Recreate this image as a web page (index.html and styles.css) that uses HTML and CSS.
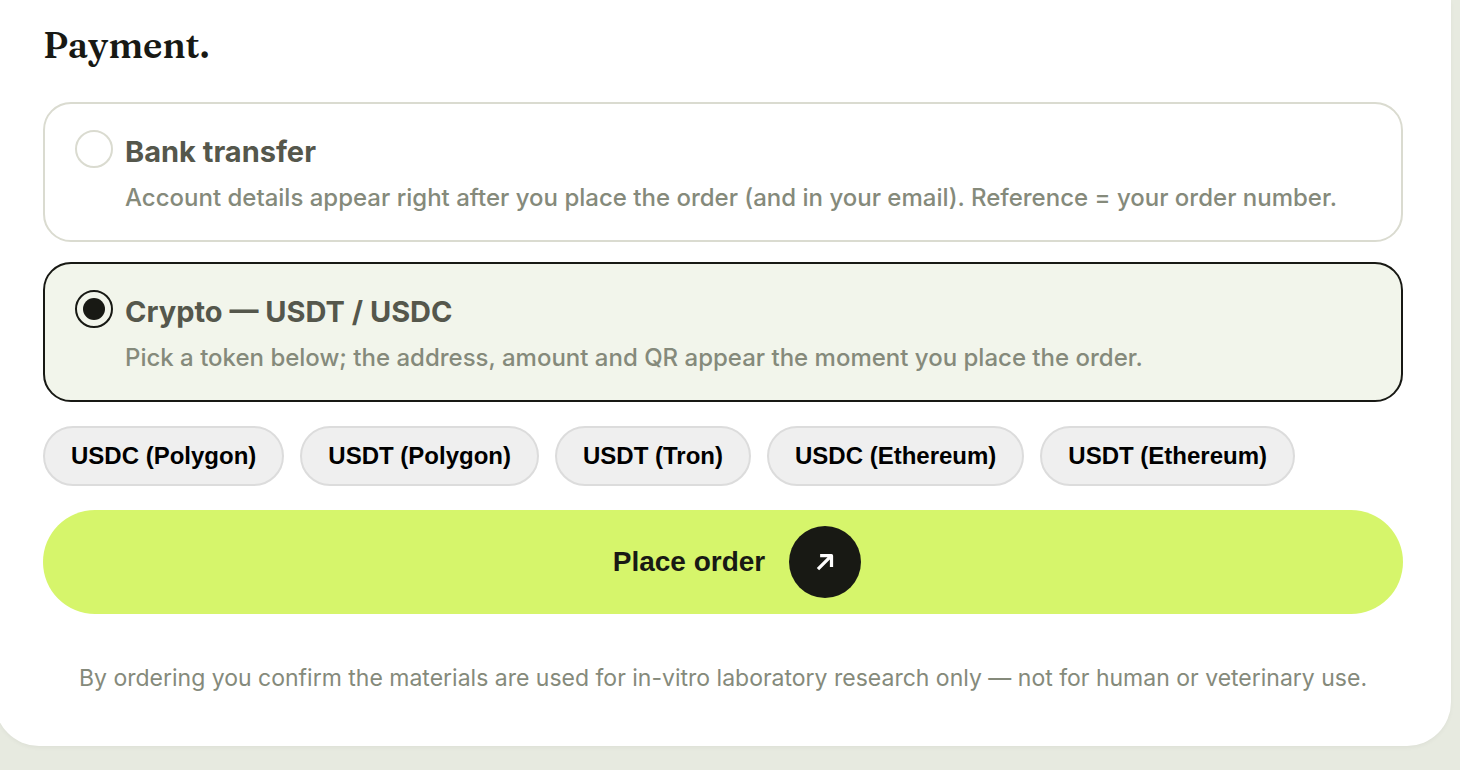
FILE: index.html
```
<!DOCTYPE html>
<html lang="en">
<head>
<meta charset="utf-8">
<meta name="viewport" content="width=device-width, initial-scale=1">
<title>Payment</title>
<link rel="stylesheet" href="styles.css">
</head>
<body>
<main class="panel">
  <h2 class="heading" id="payment-heading">Payment.</h2>
  <form class="form" aria-labelledby="payment-heading">
    <div class="options">
      <label class="option">
        <input class="option-radio" type="radio" name="method" value="bank">
        <span class="option-text">
          <span class="option-title">Bank transfer</span>
          <span class="option-note">Account details appear right after you place the order (and in your email). Reference = your order number.</span>
        </span>
      </label>
      <label class="option">
        <input class="option-radio" type="radio" name="method" value="crypto" checked>
        <span class="option-text">
          <span class="option-title">Crypto — USDT / USDC</span>
          <span class="option-note">Pick a token below; the address, amount and QR appear the moment you place the order.</span>
        </span>
      </label>
    </div>
    <div class="tokens">
      <button class="token" type="button">USDC (Polygon)</button>
      <button class="token" type="button">USDT (Polygon)</button>
      <button class="token" type="button">USDT (Tron)</button>
      <button class="token" type="button">USDC (Ethereum)</button>
      <button class="token" type="button">USDT (Ethereum)</button>
    </div>
    <button class="submit" type="submit">
      <span>Place order</span>
      <span class="submit-badge">
        <svg class="submit-icon" viewBox="0 0 24 24" aria-hidden="true"><path d="M5.5 18.5 17.5 6.5M7.5 6.2H18V16.5"/></svg>
      </span>
    </button>
  </form>
  <p class="disclaimer">By ordering you confirm the materials are used for in-vitro laboratory research only — not for human or veterinary use.</p>
</main>
</body>
</html>
```
FILE: styles.css
```
* {
  box-sizing: border-box;
}

body {
  margin: 0;
  background: #e7eae0;
  color: #181914;
  font-family: Inter, "Liberation Sans", sans-serif;
  overflow-x: hidden;
}

.panel {
  margin: 0 9px 24px -5px;
  padding: 20px 48px 50px;
  background: #fff;
  border-radius: 0 0 44px 44px;
  box-shadow: 0 2px 4px rgba(24, 25, 20, 0.04);
}

.heading {
  margin: 0 0 32px;
  font-family: Fraunces, "Liberation Serif", serif;
  font-size: 36px;
  font-weight: 600;
  line-height: 50px;
}

.options {
  display: grid;
  gap: 20px;
}

.option {
  display: flex;
  align-items: flex-start;
  gap: 12px;
  padding: 26px 30px 22px;
  border: 2px solid #dadbd0;
  border-radius: 28px;
  cursor: pointer;
}

.option:has(:checked) {
  border-color: #181914;
  background: #f2f5eb;
}

.option-radio {
  flex: none;
  appearance: none;
  display: grid;
  place-items: center;
  width: 38px;
  height: 38px;
  margin: 0;
  border: 2px solid #dadbd0;
  border-radius: 50%;
}

.option-radio:checked {
  border-color: #181914;
}

.option-radio:checked::before {
  content: "";
  width: 22px;
  height: 22px;
  border-radius: 50%;
  background: #181914;
}

.option-text {
  display: grid;
  gap: 4px;
}

.option-title {
  color: #55574c;
  font-size: 29px;
  font-weight: 700;
  line-height: 44px;
}

.option-note {
  color: #858a7b;
  font-size: 24px;
  font-weight: 500;
  line-height: 40px;
}

.tokens {
  display: flex;
  flex-wrap: wrap;
  gap: 16px;
  margin: 24px 0;
}

.token {
  height: 60px;
  padding: 0 26px;
  border: 2px solid #dcdcdc;
  border-radius: 30px;
  background: #efefef;
  color: #000;
  font: 700 24px "Liberation Sans", Arial, sans-serif;
}

.submit {
  display: flex;
  align-items: center;
  justify-content: center;
  gap: 24px;
  width: 100%;
  padding: 16px 0 16px 28px;
  border: 0;
  border-radius: 52px;
  background: #d6f56b;
  color: #181914;
  font: 700 28px "Liberation Sans", Arial, sans-serif;
}

.submit-badge {
  display: grid;
  place-items: center;
  width: 72px;
  height: 72px;
  border-radius: 50%;
  background: #181914;
}

.submit-icon {
  width: 26px;
  height: 26px;
  fill: none;
  stroke: #fff;
  stroke-width: 3;
  stroke-linejoin: round;
}

.disclaimer {
  margin: 46px 0 0;
  color: #858a7b;
  font-size: 23px;
  line-height: 36px;
  text-align: center;
}
```
